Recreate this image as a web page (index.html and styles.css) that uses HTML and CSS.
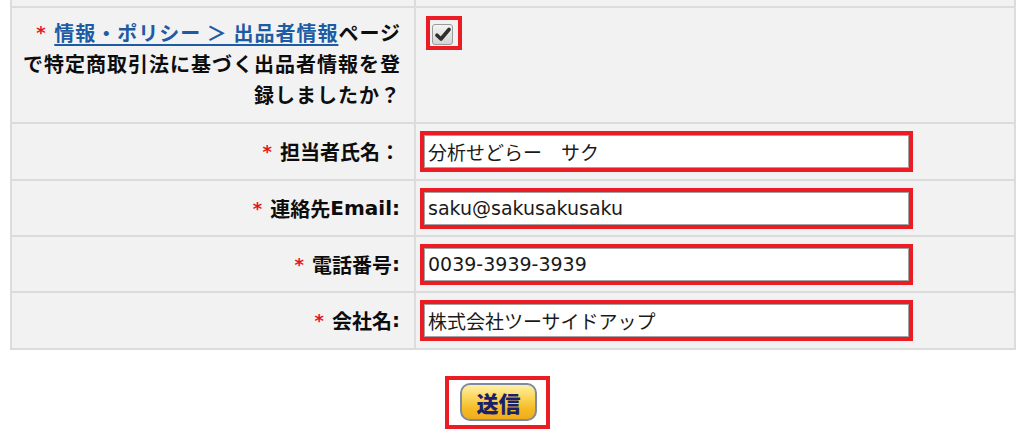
FILE: index.html
```html
<!DOCTYPE html>
<html lang="ja">
<head>
<meta charset="utf-8">
<title>出品者情報</title>
<link rel="stylesheet" href="styles.css">
</head>
<body>
<div class="form-grid">
  <div class="cell stub"></div>
  <div class="cell stub"></div>

  <div class="cell label multi"><span class="req">*</span> <a class="link" href="#">情報・ポリシー ＞ 出品者情報</a>ページで特定商取引法に基づく出品者情報を登録しましたか？</div>
  <div class="cell value top">
    <span class="mark mark-check"><span class="checkbox"><svg width="16" height="15" viewBox="0 0 16 15"><path d="M2 8.2 L6 12 L14 2.5" fill="none" stroke="#2e2e2e" stroke-width="3.6" stroke-linecap="round" stroke-linejoin="round"/></svg></span></span>
  </div>

  <div class="cell label"><span class="req">*</span> 担当者氏名：</div>
  <div class="cell value"><span class="mark"><span class="input">分析せどらー　サク</span></span></div>

  <div class="cell label"><span class="req">*</span> 連絡先<span class="latin">Email:</span></div>
  <div class="cell value"><span class="mark"><span class="input">saku@sakusakusaku</span></span></div>

  <div class="cell label"><span class="req">*</span> 電話番号<span class="latin">:</span></div>
  <div class="cell value"><span class="mark"><span class="input">0039-3939-3939</span></span></div>

  <div class="cell label"><span class="req">*</span> 会社名<span class="latin">:</span></div>
  <div class="cell value"><span class="mark"><span class="input">株式会社ツーサイドアップ</span></span></div>
</div>

<div class="actions">
  <span class="mark mark-btn"><button class="submit" type="button">送信</button></span>
</div>
</body>
</html>
```

FILE: styles.css
```css
html, body {
  margin: 0;
  padding: 0;
  background: #ffffff;
}

body {
  font-family: "Noto Sans CJK JP", sans-serif;
  color: #111;
}

.form-grid {
  display: grid;
  grid-template-columns: 402px 1fr;
  grid-template-rows: 6px 114px 55px 54px 54px 55px;
  gap: 2px;
  width: 1002px;
  margin-left: 10px;
  padding: 0 2px 2px 2px;
  background: #dcdcdc;
}

.cell {
  background: #f2f2f2;
}

.label {
  display: flex;
  align-items: center;
  justify-content: flex-end;
  padding: 0 14px 0 10px;
  font-size: 20px;
  font-weight: bold;
  color: #0d0d0d;
  text-align: right;
  line-height: 31px;
}

.label.multi {
  display: block;
  padding-top: 9px;
  padding-right: 13px;
  padding-left: 8px;
  letter-spacing: 1px;
}

.req {
  color: #e8141c;
  font-family: "DejaVu Sans", sans-serif;
  font-size: 18px;
  margin-right: 2px;
  vertical-align: 2px;
}

.label:not(.multi) .req {
  margin-right: 8px;
}

.latin {
  font-family: "DejaVu Sans", sans-serif;
  font-weight: bold;
}

.link {
  color: #1d5ba4;
  text-decoration: underline;
  text-underline-offset: 3px;
}

.value {
  display: flex;
  align-items: center;
  padding-left: 4px;
}

.value.top {
  align-items: flex-start;
  padding-left: 10px;
  padding-top: 8px;
}

.mark {
  display: inline-flex;
  border: 4px solid #ec1c24;
  box-sizing: border-box;
}

.mark-check {
  width: 36px;
  height: 34px;
  align-items: flex-start;
  justify-content: flex-start;
  padding: 4px 0 0 2px;
}

.checkbox {
  width: 21px;
  height: 21px;
  box-sizing: border-box;
  border: 1px solid #9a9a9a;
  border-radius: 3px;
  background: linear-gradient(#f4f4f4, #d4d4d4);
  display: flex;
  align-items: center;
  justify-content: center;
}

.input {
  display: flex;
  align-items: center;
  width: 485px;
  height: 33px;
  box-sizing: border-box;
  border: 1px solid #a3a3a3;
  background: #ffffff;
  padding-left: 3px;
  font-family: "DejaVu Sans", "Noto Sans CJK JP", sans-serif;
  font-size: 19px;
  color: #1a1a1a;
  white-space: pre;
}

.actions {
  padding: 26px 0 0 445px;
}

.mark-btn {
  padding: 3px 9px 4px 11px;
}

.submit {
  width: 77px;
  height: 38px;
  box-sizing: border-box;
  border: 2px solid #7c8aa4;
  border-radius: 10px;
  background: linear-gradient(#fff0a8 0%, #fcd75e 35%, #f5bb26 70%, #f0ac18 100%);
  font-family: "Noto Sans CJK JP", sans-serif;
  font-weight: 900;
  font-size: 22px;
  color: #1b1f6e;
  padding: 0;
  line-height: 1;
  cursor: pointer;
}
```
